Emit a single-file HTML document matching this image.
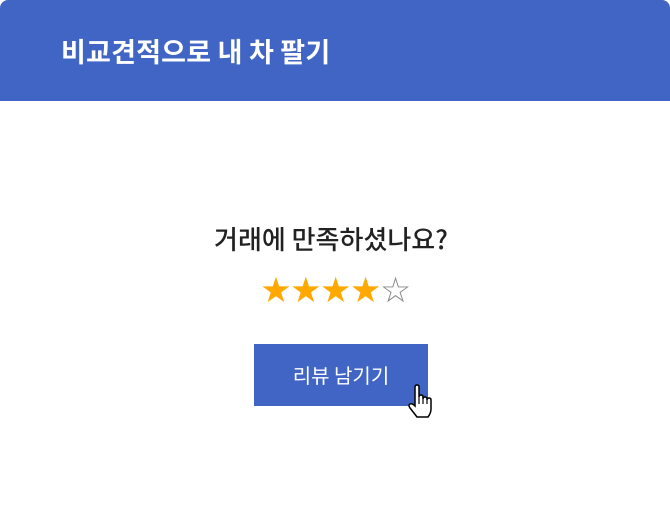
<!DOCTYPE html>
<html><head><meta charset="utf-8"><style>
body{margin:0;width:670px;height:522px;background:#fff;font-family:"Noto Sans CJK KR",sans-serif;position:relative;overflow:hidden}
.hd{position:absolute;left:0;top:0;width:670px;height:101px;background:#4065c4;border-radius:8px 8px 0 0}
.hd span{position:absolute;left:61px;top:31px;font-size:27px;font-weight:bold;color:#fff;line-height:40px;letter-spacing:0.2px}
.q{position:absolute;left:-4px;width:670px;top:220px;text-align:center;font-size:26px;font-weight:500;color:#222;line-height:38px;letter-spacing:0px}
.st{position:absolute;left:0;width:670px;top:270px;text-align:center;font-family:"DejaVu Sans",sans-serif;font-size:35px;line-height:42px;color:#ffa800;letter-spacing:-1.5px}
.st i{font-style:normal;color:#888}
.btn{position:absolute;left:254px;top:344px;width:174px;height:62px;background:#4065c4;color:#fff;font-size:20px;line-height:62px;text-align:center}
svg{position:absolute;left:406px;top:384px}
</style></head><body>
<div class="hd"><span>비교견적으로 내 차 팔기</span></div>
<div class="q">거래에 만족하셨나요?</div>
<div class="st">★★★★<i>☆</i></div>
<div class="btn">리뷰 남기기</div>
<svg width="32" height="36" viewBox="0 0 32 36"><path d="M9 3 Q9 1 11 1 Q13 1 13 3 V13 Q13 11 15 11 Q17 11 17 13 V15 Q17 13 19 13 Q21 13 21 15 V16 Q21 14 23 14 Q25 14 25 16 V25 Q25 29 22 33 H11 Q8 29 4 24 Q2 21 4 20 Q6 19 9 22 Z" fill="#fff" stroke="#000" stroke-width="1.5"/><path d="M13 13V20M17 15V20M21 16V20" stroke="#000" stroke-width="1.2"/></svg>
</body></html>
